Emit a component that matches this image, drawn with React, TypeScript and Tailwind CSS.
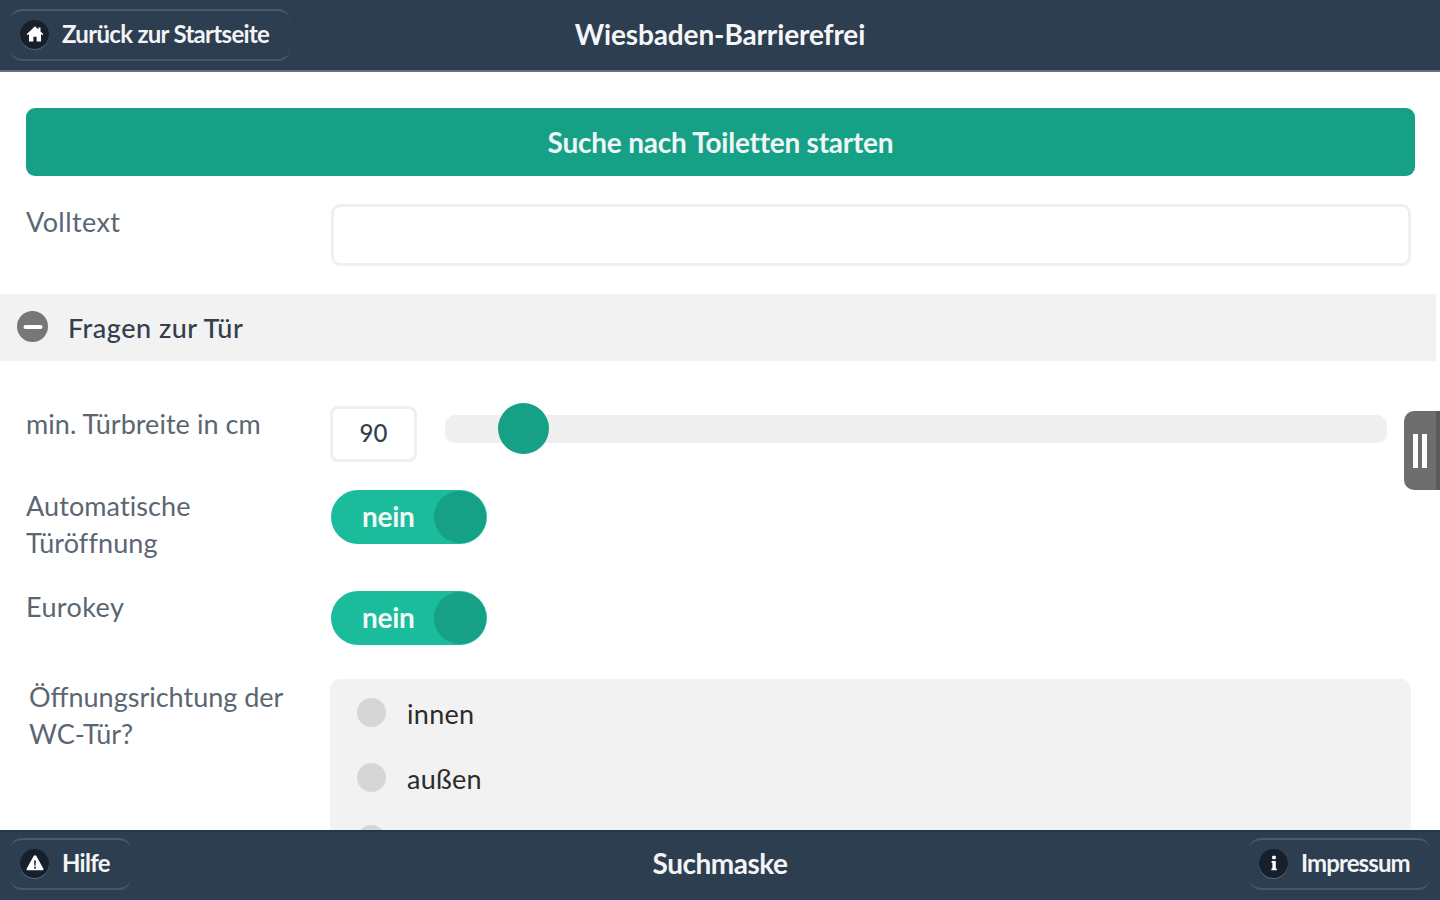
import { Minus } from 'lucide-react';
import type { ReactNode } from 'react';

const font = 'font-["Lato","Noto_Sans",sans-serif]';

function HomeIcon() {
  return (
    <svg viewBox="0 0 20 20" className="h-[20px] w-[20px]" fill="currentColor">
      <path d="M10 2.2 1.6 10.2l1.1 1.1L4 10.1V17.4h4.4v-4.6h3.2v4.6H16v-7.3l1.3 1.2 1.1-1.1-2.9-2.8V3.6h-2.2v1.8Z" />
    </svg>
  );
}

function AlertIcon() {
  return (
    <svg viewBox="0 0 20 20" className="h-[20px] w-[20px]">
      <path d="M10 2.2c.6 0 1 .3 1.3.8l7 12.4c.5.9-.1 1.9-1.1 1.9H2.8c-1 0-1.6-1-1.1-1.9l7-12.4c.3-.5.7-.8 1.3-.8Z" fill="currentColor" />
      <path d="M9.1 7.4h1.8l-.3 5.4H9.4ZM9.1 13.8h1.8v1.7H9.1Z" fill="#16202c" />
    </svg>
  );
}

function InfoIcon() {
  return (
    <svg viewBox="0 0 20 20" className="h-[20px] w-[20px]" fill="currentColor">
      <rect x="8.2" y="2.8" width="3.6" height="3.4" rx="0.6" />
      <path d="M7.6 8h4.2v7.4h1v1.9H7.4v-1.9h1V9.9h-.8Z" />
    </svg>
  );
}

function BarButton({ icon, label, className, tracking = 'tracking-[-0.7px]' }: { icon: ReactNode; label: string; className: string; tracking?: string }) {
  return (
    <div className={`flex h-[52px] items-center rounded-xl border-t-2 border-b-2 border-t-[#4a5a6c] border-b-[#46566a] pb-[2px] ${className}`}>
      <span className="flex h-[29px] w-[29px] shrink-0 items-center justify-center rounded-full bg-[#16202c] text-white shadow-[0_1px_0_#5b6977]">
        {icon}
      </span>
      <span className={`text-[24px] font-bold leading-none text-[#f2f4f5] ${tracking}`}>{label}</span>
    </div>
  );
}

function Toggle() {
  return (
    <div className="ml-[1px] flex h-[54px] w-[156px] items-center justify-between rounded-full bg-[#1abc9c] pl-[31px] pr-[1px]">
      <span className="-mt-[2px] text-[28px] font-bold leading-none tracking-[-0.3px] text-[#f1f8f6]">nein</span>
      <span className="h-[52px] w-[52px] rounded-full bg-[#16a085]" />
    </div>
  );
}

function Radio({ label, className = '' }: { label?: string; className?: string }) {
  return (
    <div className={`flex h-[65px] items-center gap-[21px] pl-[27px] ${className}`}>
      <span className="mb-[3px] h-[29px] w-[29px] rounded-full bg-[#d6d6d6]" />
      {label ? <span className="text-[27px] leading-none tracking-[0.3px] text-[#2b2b2b]">{label}</span> : null}
    </div>
  );
}

export default function App() {
  return (
    <div className={`relative flex h-screen w-full flex-col overflow-hidden bg-white ${font}`}>
      <header className="relative flex h-[72px] shrink-0 items-center justify-center border-b-2 border-[#66727f] bg-[#2c3e50]">
        <div className="absolute left-[10px] top-[9px]">
          <BarButton icon={<HomeIcon />} label="Zurück zur Startseite" className="w-[280px] gap-[13px] pl-[10px]" />
        </div>
        <h1 className="-mt-[3px] text-[28px] font-bold leading-none tracking-[-0.13px] text-[#f5f6f7]">Wiesbaden-Barrierefrei</h1>
      </header>

      <main className="min-h-0 flex-1 overflow-hidden">
        <div className="px-[26px] pt-[36px]">
          <button className="flex h-[68px] w-[1389px] items-center justify-center rounded-[9px] bg-[#16a085] text-[28px] font-bold tracking-[-0.23px] text-[#eef7f5]">
            Suche nach Toiletten starten
          </button>
          <div className="mt-[28px] flex">
            <label className="w-[305px] pt-[4px] text-[27px] leading-none tracking-[0.4px] text-[#5b6673]">Volltext</label>
            <div className="h-[62px] w-[1080px] rounded-[9px] border-[3px] border-[#efefef] bg-white" />
          </div>
        </div>

        <div className="mt-[28px] flex h-[67px] w-[1436px] items-center gap-[20px] bg-[#f2f2f2] pl-[17px]">
          <span className="-mt-[2px] flex h-[31px] w-[31px] items-center justify-center rounded-full bg-[#777777]">
            <Minus className="h-[26px] w-[26px] text-white" strokeWidth={3.5} />
          </span>
          <span className="text-[27px] font-medium leading-none tracking-[0.5px] text-[#333f4c]">Fragen zur Tür</span>
        </div>

        <div className="px-[26px]">
          <div className="mt-[45px] flex">
            <label className="w-[304px] pt-[4px] text-[27px] leading-none tracking-[0.05px] text-[#5b6673]">min. Türbreite in cm</label>
            <div className="flex h-[56px] w-[87px] items-center justify-center rounded-[8px] border-[3px] border-[#efefef] pb-[3px] text-[24px] font-medium text-[#333f4c]">
              90
            </div>
            <div className="relative ml-[28px] mt-[9px] h-[28px] w-[942px] rounded-[10px] bg-[#efefef]">
              <span className="absolute left-[53px] top-[-12px] h-[51px] w-[51px] rounded-full bg-[#16a085]" />
            </div>
          </div>

          <div className="mt-[28px] flex">
            <label className="-mt-[3px] w-[304px] text-[27px] leading-[37px] tracking-[0.1px] text-[#5b6673]">
              Automatische
              <br />
              Türöffnung
            </label>
            <Toggle />
          </div>

          <div className="mt-[30px] flex">
            <label className="-mt-[3px] w-[304px] text-[27px] leading-[37px] tracking-[0.4px] text-[#5b6673]">Eurokey</label>
            <Toggle />
          </div>

          <div className="mt-[34px] flex">
            <label className="-mt-[1px] w-[304px] pl-[3px] text-[27px] leading-[37px] text-[#5b6673]">
              Öffnungsrichtung der
              <br />
              WC-Tür?
            </label>
            <div className="h-[200px] w-[1081px] rounded-[10px] bg-[#f2f2f2] pt-[2px]">
              <Radio label="innen" />
              <Radio label="außen" />
              <Radio className="-mt-[3px]" />
            </div>
          </div>
        </div>
      </main>

      <footer className="relative z-10 flex h-[70px] shrink-0 items-center justify-center border-t-2 border-[#1e3a4a] bg-[#2c3e50]">
        <div className="absolute left-[10px] top-[6px]">
          <BarButton icon={<AlertIcon />} label="Hilfe" className="w-[121px] gap-[13px] pl-[10px]" />
        </div>
        <span className="-mt-[6px] text-[28px] font-bold leading-none tracking-[-0.5px] text-[#f2f4f5]">Suchmaske</span>
        <div className="absolute right-[10px] top-[6px]">
          <BarButton icon={<InfoIcon />} label="Impressum" tracking="tracking-[-0.9px]" className="w-[181px] gap-[13px] pl-[10px]" />
        </div>
      </footer>

      <div className="absolute right-[4px] top-[411px] flex h-[79px] w-[32px] items-center justify-center gap-[4px] rounded-l-[10px] bg-[#6e6e6e]">
        <span className="h-[34px] w-[5px] bg-white" />
        <span className="h-[34px] w-[5px] bg-white" />
      </div>
      <div className="absolute right-0 top-[411px] h-[79px] w-[4px] bg-[#5a5a5a]" />
    </div>
  );
}
